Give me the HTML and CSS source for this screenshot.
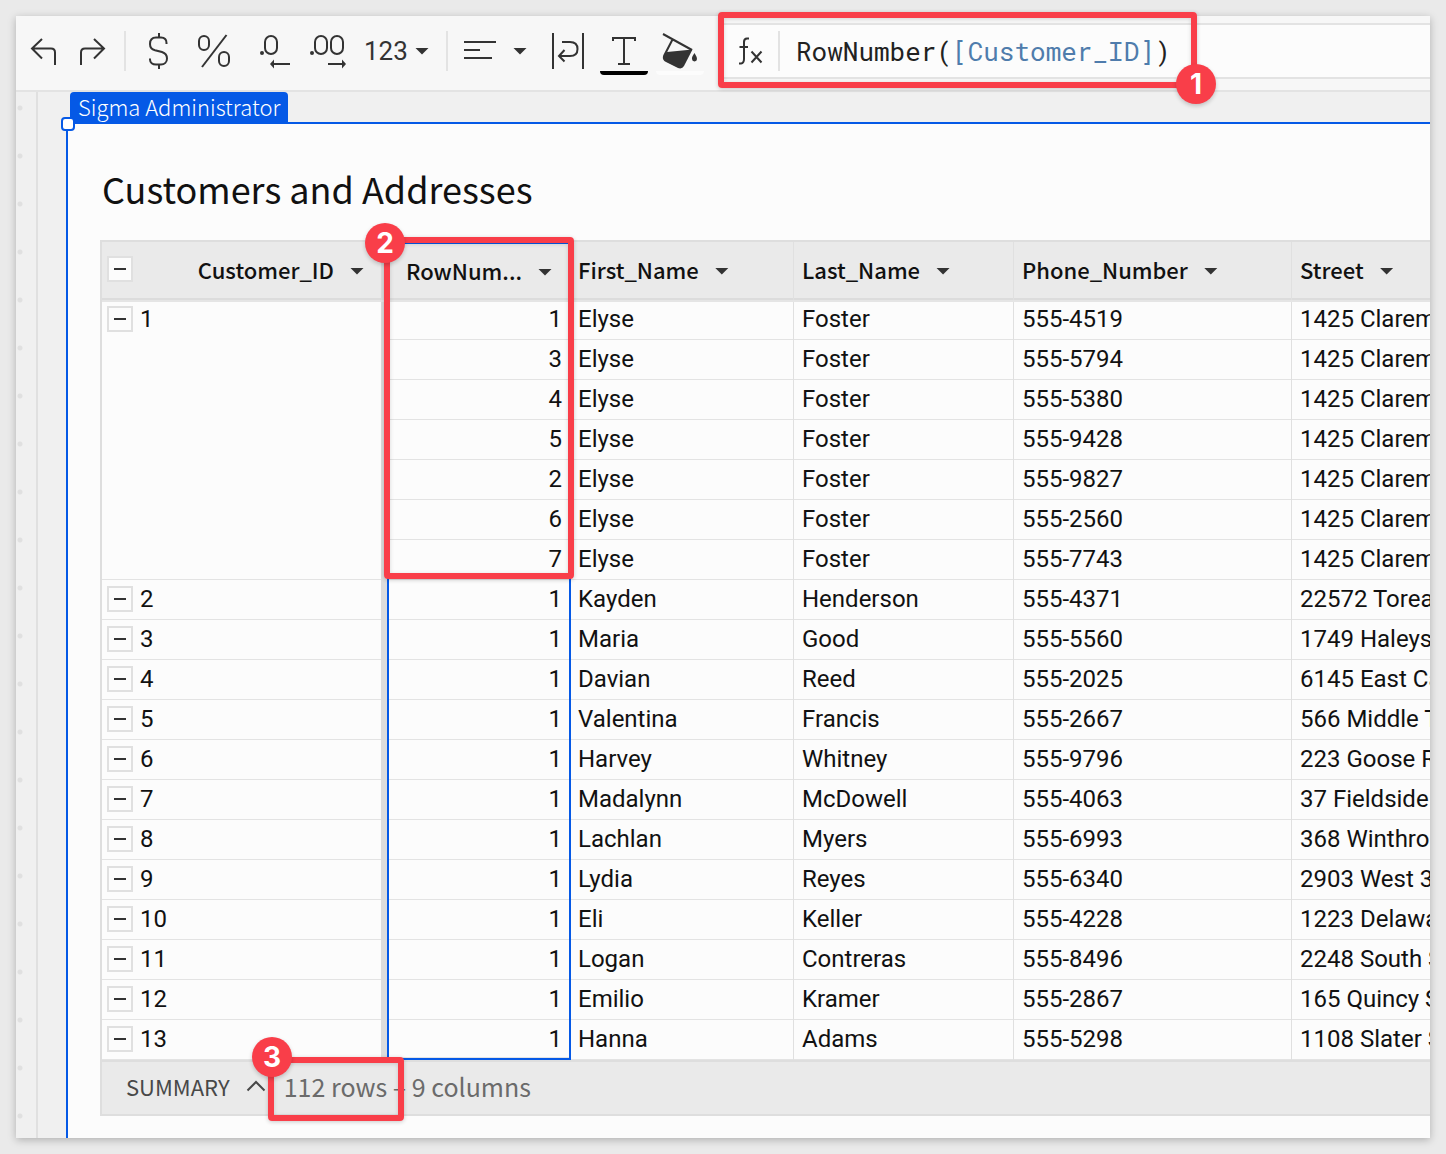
FILE: index.html
```html
<!DOCTYPE html>
<html lang="en">
<head>
<meta charset="utf-8">
<title>Customers and Addresses</title>
<link rel="stylesheet" href="styles.css">
</head>
<body>
<main class="stage">
<div class="frame">
  <header class="toolbar">
    <div class="history">
      <button class="tool" aria-label="Undo"><svg viewBox="0 0 48 48"><path d="M22 12 12 21.500 22 31.500M12 21.500H31Q35 21.500 35 25.500V38"/></svg></button>
      <button class="tool" aria-label="Redo"><svg viewBox="0 0 48 48"><path d="M26 12 36 21.500 26 31.500M36 21.500H17Q13 21.500 13 25.500V38"/></svg></button>
    </div>
    <span class="divider"></span>
    <button class="tool" aria-label="Currency"><svg viewBox="0 0 48 48"><path d="M25 6V11M25 37V42M32.500 17V16C32.500 12 30 10.500 27 10.500H22C18 10.500 16 13 16 17C16 21 18 22.500 21 23.300L28 25C31 26 33 28 33 31.500C33 35 30.500 37.500 27 37.500H22C18.500 37.500 16 35.500 16 32.500V31.500"/></svg></button>
    <button class="tool" aria-label="Percent"><svg viewBox="0 0 48 48"><rect x="9" y="9" width="10" height="14" rx="5"/><rect x="29" y="25" width="10" height="14" rx="5"/><path d="M36.500 8 12 40"/></svg></button>
    <button class="tool" aria-label="Fewer decimals"><svg viewBox="0 0 48 48"><rect x="19" y="9" width="12" height="18" rx="6"/><circle class="solid" cx="16" cy="26" r="2"/><path d="M27 37H44"/><path class="solid" d="M24 37 28 32.500V41.500Z"/></svg></button>
    <button class="tool" aria-label="More decimals"><svg viewBox="0 0 48 48"><rect x="13" y="9" width="12" height="18" rx="6"/><rect x="29" y="9" width="12" height="18" rx="6"/><circle class="solid" cx="10" cy="26" r="2"/><path d="M26 37H41"/><path class="solid" d="M44 37 40 32.500V41.500Z"/></svg></button>
    <button class="tool menu" aria-haspopup="true"><span>123</span><i class="arrow"></i></button>
    <span class="divider"></span>
    <button class="tool menu" aria-label="Alignment" aria-haspopup="true"><svg class="lines" viewBox="0 0 32 48"><path d="M0 15H32M0 23H16M0 31H28"/></svg><i class="arrow"></i></button>
    <button class="tool" aria-label="Text wrapping"><svg viewBox="0 0 48 48"><path d="M9 6V42M39 6V42M18 15H26C31 15 33.500 18 33.500 22S31 29 26 29H15M20.500 23 15 29 20.500 34.500"/></svg></button>
    <button class="tool swatch text-color" aria-label="Text color"><svg viewBox="0 0 48 48"><path d="M13 14V11H35V14M24 11V37M18 37H30"/></svg></button>
    <button class="tool swatch fill-color" aria-label="Background color"><svg viewBox="0 0 48 48"><path d="M7 7 36 23M16.500 12.500 8 29"/><path class="solid" d="M11 25 36.500 22.500 28 39Q26 42.500 22 41L10 35Q6 33 7 29Z"/><path class="solid" d="M38.500 26Q35.500 30 36 32A2.500 2.500 0 0 0 41 32Q41 30 38.500 26Z"/></svg></button>
    <div class="formula">
      <svg class="fx" viewBox="0 0 26 32" aria-hidden="true"><path d="M11 3.500H9Q6 3.500 6 7V24Q6 28 3 28.500H1M1.500 12H10M13.500 16.500 23.500 27.500M23.500 16.500 13.500 27.500"/></svg>
      <span class="divider"></span>
      <div class="expression" role="textbox" aria-label="Formula" contenteditable="true" spellcheck="false">RowNumber(<span class="ref">[Customer_ID]</span>)</div>
    </div>
  </header>
  <div class="canvas">
    <div class="gutter"></div>
    <div class="area">
      <div class="owner">Sigma Administrator</div>
      <section class="element">
        <span class="handle"></span>
        <h1>Customers and Addresses</h1>
        <div class="grid">
          <table>
            <colgroup><col class="c-id"><col class="c-row"><col class="c-first"><col class="c-last"><col class="c-phone"><col></colgroup>
            <thead>
              <tr>
                <th class="key"><div class="head end"><button class="toggle" aria-label="Collapse all"></button><span>Customer_ID</span><button class="arrow" aria-label="Customer_ID menu"></button></div></th>
                <th class="sel"><div class="head end"><span>RowNum...</span><button class="arrow" aria-label="RowNumber menu"></button></div></th>
                <th><div class="head"><span>First_Name</span><button class="arrow" aria-label="First_Name menu"></button></div></th>
                <th><div class="head"><span>Last_Name</span><button class="arrow" aria-label="Last_Name menu"></button></div></th>
                <th><div class="head"><span>Phone_Number</span><button class="arrow" aria-label="Phone_Number menu"></button></div></th>
                <th><div class="head"><span>Street</span><button class="arrow" aria-label="Street menu"></button></div></th>
              </tr>
            </thead>
            <tbody>
              <tr><td class="key" rowspan="7"><div class="group"><button class="toggle" aria-label="Collapse"></button>1</div></td><td class="sel">1</td><td>Elyse</td><td>Foster</td><td>555-4519</td><td>1425 Clarem</td></tr>
              <tr><td class="sel">3</td><td>Elyse</td><td>Foster</td><td>555-5794</td><td>1425 Clarem</td></tr>
              <tr><td class="sel">4</td><td>Elyse</td><td>Foster</td><td>555-5380</td><td>1425 Clarem</td></tr>
              <tr><td class="sel">5</td><td>Elyse</td><td>Foster</td><td>555-9428</td><td>1425 Clarem</td></tr>
              <tr><td class="sel">2</td><td>Elyse</td><td>Foster</td><td>555-9827</td><td>1425 Clarem</td></tr>
              <tr><td class="sel">6</td><td>Elyse</td><td>Foster</td><td>555-2560</td><td>1425 Clarem</td></tr>
              <tr><td class="sel">7</td><td>Elyse</td><td>Foster</td><td>555-7743</td><td>1425 Clarem</td></tr>
              <tr><td class="key"><div class="group"><button class="toggle" aria-label="Collapse"></button>2</div></td><td class="sel">1</td><td>Kayden</td><td>Henderson</td><td>555-4371</td><td>22572 Torea</td></tr>
              <tr><td class="key"><div class="group"><button class="toggle" aria-label="Collapse"></button>3</div></td><td class="sel">1</td><td>Maria</td><td>Good</td><td>555-5560</td><td>1749 Haleys</td></tr>
              <tr><td class="key"><div class="group"><button class="toggle" aria-label="Collapse"></button>4</div></td><td class="sel">1</td><td>Davian</td><td>Reed</td><td>555-2025</td><td>6145 East Ca</td></tr>
              <tr><td class="key"><div class="group"><button class="toggle" aria-label="Collapse"></button>5</div></td><td class="sel">1</td><td>Valentina</td><td>Francis</td><td>555-2667</td><td>566 Middle T</td></tr>
              <tr><td class="key"><div class="group"><button class="toggle" aria-label="Collapse"></button>6</div></td><td class="sel">1</td><td>Harvey</td><td>Whitney</td><td>555-9796</td><td>223 Goose R</td></tr>
              <tr><td class="key"><div class="group"><button class="toggle" aria-label="Collapse"></button>7</div></td><td class="sel">1</td><td>Madalynn</td><td>McDowell</td><td>555-4063</td><td>37 Fieldside</td></tr>
              <tr><td class="key"><div class="group"><button class="toggle" aria-label="Collapse"></button>8</div></td><td class="sel">1</td><td>Lachlan</td><td>Myers</td><td>555-6993</td><td>368 Winthro</td></tr>
              <tr><td class="key"><div class="group"><button class="toggle" aria-label="Collapse"></button>9</div></td><td class="sel">1</td><td>Lydia</td><td>Reyes</td><td>555-6340</td><td>2903 West 3</td></tr>
              <tr><td class="key"><div class="group"><button class="toggle" aria-label="Collapse"></button>10</div></td><td class="sel">1</td><td>Eli</td><td>Keller</td><td>555-4228</td><td>1223 Delawa</td></tr>
              <tr><td class="key"><div class="group"><button class="toggle" aria-label="Collapse"></button>11</div></td><td class="sel">1</td><td>Logan</td><td>Contreras</td><td>555-8496</td><td>2248 South S</td></tr>
              <tr><td class="key"><div class="group"><button class="toggle" aria-label="Collapse"></button>12</div></td><td class="sel">1</td><td>Emilio</td><td>Kramer</td><td>555-2867</td><td>165 Quincy S</td></tr>
              <tr><td class="key"><div class="group"><button class="toggle" aria-label="Collapse"></button>13</div></td><td class="sel">1</td><td>Hanna</td><td>Adams</td><td>555-5298</td><td>1108 Slater S</td></tr>
            </tbody>
          </table>
          <footer class="summary">
            <button class="summary-toggle">SUMMARY<svg viewBox="0 0 20 12" aria-hidden="true"><path d="M1.500 10.500 10 2 18.500 10.500"/></svg></button>
            <span class="counts">112 rows – 9 columns</span>
          </footer>
        </div>
      </section>
    </div>
  </div>
</div>
<div class="callout callout-formula"><span class="badge">1</span></div>
<div class="callout callout-column"><span class="badge">2</span></div>
<div class="callout callout-rows"><span class="badge">3</span></div>
</main>
</body>
</html>
```

FILE: styles.css
```css
* { box-sizing: border-box; }

body {
  margin: 0;
  background: #eaeaea;
  color: #111;
  font: 24px/28px Roboto, "Liberation Sans", sans-serif;
}

button {
  padding: 0;
  border: 0;
  background: none;
  color: inherit;
  font: inherit;
}

.stage { position: relative; padding: 16px; overflow: hidden; }

.frame {
  overflow: hidden;
  background: #f0f0f0;
  box-shadow: 0 2px 8px rgba(0, 0, 0, 0.25);
}

/* Toolbar */
.toolbar {
  display: flex;
  align-items: center;
  gap: 8px;
  height: 76px;
  padding: 0 0 4px 4px;
  background: #f7f7f7;
  border-bottom: 2px solid #e3e3e3;
  color: #333;
}

.history { display: flex; }

.divider { flex: none; width: 2px; height: 40px; background: #e3e3e3; }

.tool { flex: none; width: 48px; height: 48px; }

.tool svg { display: block; width: 48px; height: 48px; }

.toolbar svg, .summary svg {
  fill: none;
  stroke: currentColor;
  stroke-width: 2;
}
.toolbar svg .solid { fill: currentColor; stroke: none; }

.menu {
  display: flex;
  align-items: center;
  justify-content: space-between;
  width: 80px;
  padding: 0 9px 0 6px;
  font-size: 26px;
}
.menu .lines { width: 32px; margin-left: 2px; }

.arrow {
  display: block;
  flex: none;
  width: 14px;
  height: 7px;
  background: #333;
  clip-path: polygon(0 0, 100% 0, 50% 100%);
}

.swatch { border-bottom: 4px solid #000; border-radius: 0 0 4px 4px; }
.swatch svg { height: 48px; margin-bottom: -4px; }
.fill-color { border-bottom-color: #fcfcfc; }

.formula {
  display: flex;
  flex: 1;
  align-items: center;
  gap: 16px;
  min-width: 0;
  height: 56px;
  margin-left: 8px;
  padding-left: 18px;
  background: #fcfcfc;
  border: solid #e3e3e3;
  border-width: 2px 0;
}
.formula .fx { flex: none; width: 26px; height: 32px; }
.formula .divider { margin-left: -2px; }

.expression {
  color: #222;
  font: 26px/32px "Roboto Mono", "Liberation Mono", monospace;
  white-space: nowrap;
}
.ref { color: #4f7cac; }

/* Canvas */
.canvas { display: flex; }

.gutter {
  flex: none;
  width: 22px;
  border-right: 2px solid #e0e0e0;
  background: radial-gradient(circle at 4px 16px, #e0e0e0 2px, transparent 3px) 0 0 / 20px 48px repeat-y;
}

.area { flex: 1; min-width: 0; padding-left: 28px; }

.owner {
  width: max-content;
  height: 30px;
  margin-left: 4px;
  padding: 0 8px;
  border-radius: 4px 4px 0 0;
  background: #0559e6;
  color: #fff;
  font: 300 22px/28px "Noto Sans CJK SC", "Noto Sans", sans-serif;
}

.element {
  position: relative;
  padding: 40px 0 22px 32px;
  background: #fcfcfc;
  border: solid #0559e6;
  border-width: 2px 0 0 2px;
}

.handle {
  position: absolute;
  top: -7px;
  left: -7px;
  width: 14px;
  height: 14px;
  background: #fff;
  border: 2px solid #0559e6;
  border-radius: 4px;
}

h1 {
  margin: 0 0 28px 2px;
  font: 36px/48px "Noto Sans CJK SC", "Noto Sans", sans-serif;
}

.grid { border: solid #dedede; border-width: 2px 0 2px 2px; }

table {
  width: 100%;
  min-width: 1328px;
  table-layout: fixed;
  border-collapse: separate;
  border-spacing: 0;
}

.c-id { width: 285px; }
.c-row { width: 184px; }
.c-first { width: 223px; }
.c-last { width: 220px; }
.c-phone { width: 278px; }

th, td {
  height: 40px;
  padding: 0 8px 2px;
  overflow: hidden;
  border-right: 1px solid #e0e0e0;
  box-shadow: inset 0 -1px 0 #e3e3e3;
  text-align: left;
  white-space: nowrap;
}
th:last-child, td:last-child { border-right: 0; }

th {
  position: relative;
  height: 58px;
  padding-bottom: 0;
  background: #eaeaea;
  box-shadow: inset 0 -2px 0 #dcdcdc, 0 2px 0 #e5e5e5;
  font: 500 22px/32px "Noto Sans CJK SC", "Noto Sans", sans-serif;
}

.key { padding: 0 0 0 5px; border-right: 6px solid #dcdcdc; vertical-align: top; }

.sel {
  padding-right: 7px;
  border-right: 2px solid #0559e6;
  border-left: 2px solid #0559e6;
  text-align: right;
}
.sel + th, .sel + td { padding-left: 7px; }
th.sel { border-top: 2px solid #0559e6; }
tr:last-child td.sel { padding-bottom: 0; border-bottom: 2px solid #0559e6; }
thead tr:last-child th.sel { border-bottom: 0; }

.head { display: flex; align-items: center; gap: 16px; height: 58px; }
.end { justify-content: flex-end; padding-right: 17px; }
.sel .head { height: 54px; padding-right: 10px; }
.head > span, .head > .toggle { margin-bottom: 4px; }
.key .head .toggle { margin-right: auto; }

.group { display: flex; align-items: center; gap: 7px; height: 38px; }

.toggle {
  display: grid;
  flex: none;
  place-items: center;
  width: 26px;
  height: 26px;
  background: #fcfcfc;
  border: 2px solid #e0e0e0;
}
.toggle::before { content: ""; width: 12px; height: 2px; background: #333; }

.summary {
  display: flex;
  align-items: center;
  gap: 18px;
  height: 54px;
  padding: 0 0 4px 24px;
  background: #eaeaea;
  border-top: 2px solid #dedede;
  font: 25px/32px "Noto Sans CJK SC", "Noto Sans", sans-serif;
  color: #6b6b6b;
}
.summary-toggle { display: flex; align-items: center; gap: 16px; color: #484848; font-size: 22px; }
.summary svg { width: 20px; height: 12px; }

/* Annotations over the page */
.callout {
  position: absolute;
  border: 6px solid #f93e49;
  border-radius: 4px;
  box-shadow: 0 1px 4px rgba(0, 0, 0, 0.2), inset 0 1px 4px rgba(0, 0, 0, 0.15);
  pointer-events: none;
}
.badge {
  position: absolute;
  display: grid;
  place-items: center;
  width: 40px;
  height: 40px;
  border-radius: 50%;
  background: #f93e49;
  box-shadow: 0 2px 4px rgba(0, 0, 0, 0.2);
  color: #fff;
  font: 700 28px/40px Inter, sans-serif;
}
.callout-formula { top: 12px; left: 718px; width: 479px; height: 76px; }
.callout-formula .badge { right: -25px; bottom: -22px; }
.callout-column { top: 237px; left: 384px; width: 190px; height: 342px; }
.callout-column .badge { top: -20px; left: -25px; }
.callout-rows { top: 1057px; left: 268px; width: 136px; height: 64px; }
.callout-rows .badge { top: -26px; left: -22px; }
```
